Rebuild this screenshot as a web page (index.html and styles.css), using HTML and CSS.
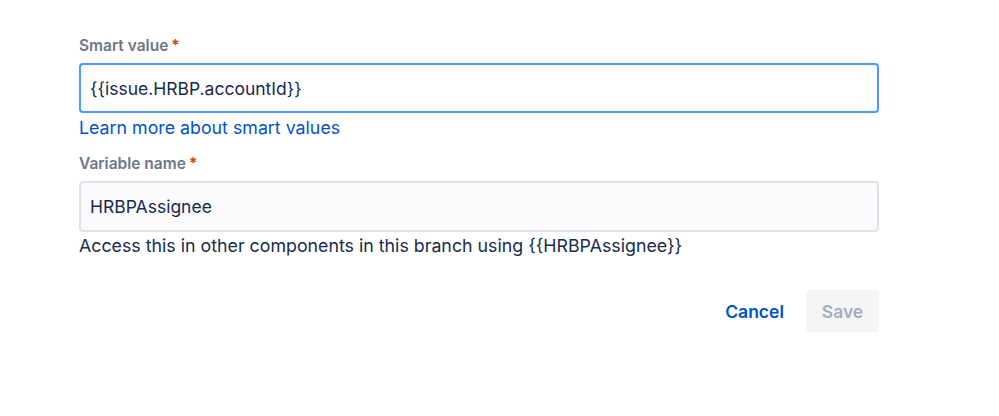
FILE: index.html
```html
<!DOCTYPE html>
<html>
<head>
<meta charset="utf-8">
<link rel="stylesheet" href="styles.css">
</head>
<body>
<div class="form">
  <div class="field">
    <label class="label">Smart value<span class="req">*</span></label>
    <div class="input focused">{{issue.HRBP.accountId}}</div>
    <a class="link" href="#">Learn more about smart values</a>
  </div>
  <div class="field second">
    <label class="label">Variable name<span class="req">*</span></label>
    <div class="input">HRBPAssignee</div>
    <div class="help">Access this in other components in this branch using {{HRBPAssignee}}</div>
  </div>
  <div class="actions">
    <button class="btn cancel">Cancel</button>
    <button class="btn save">Save</button>
  </div>
</div>
</body>
</html>
```
FILE: styles.css
```css
html, body {
  margin: 0;
  padding: 0;
  background: #ffffff;
  font-family: Inter, "Liberation Sans", Arial, sans-serif;
}
.form {
  width: 800px;
  margin-left: 79px;
  padding-top: 36px;
  display: flex;
  flex-direction: column;
}
.field {
  display: flex;
  flex-direction: column;
}
.second {
  margin-top: 14px;
}
.label {
  font-size: 15.5px;
  font-weight: 600;
  color: #6B778C;
  line-height: 20px;
  margin-bottom: 7px;
}
.req {
  color: #DE350B;
  margin-left: 3px;
}
.input {
  box-sizing: border-box;
  height: 50px;
  border: 2px solid #DFE1E6;
  background: #FAFBFC;
  border-radius: 4px;
  padding: 0 9px;
  display: flex;
  align-items: center;
  font-size: 17.5px;
  color: #172B4D;
}
.input.focused {
  border-color: #4C9AFF;
  background: #ffffff;
}
.second .input {
  height: 51px;
}
.link {
  color: #0052CC;
  text-decoration: none;
  font-size: 17.8px;
  line-height: 24px;
  margin-top: 3px;
}
.help {
  color: #172B4D;
  font-size: 17.8px;
  line-height: 24px;
  margin-top: 2px;
}
.actions {
  display: flex;
  justify-content: flex-end;
  gap: 8px;
  margin-top: 32px;
}
.btn {
  font-family: inherit;
  font-size: 17.5px;
  font-weight: 600;
  border: none;
  border-radius: 4px;
  height: 42px;
  padding: 0 14px;
  cursor: pointer;
}
.cancel {
  background: transparent;
  color: #0052CC;
}
.save {
  background: #F4F5F7;
  color: #A5ADBA;
  width: 73px;
}
```
